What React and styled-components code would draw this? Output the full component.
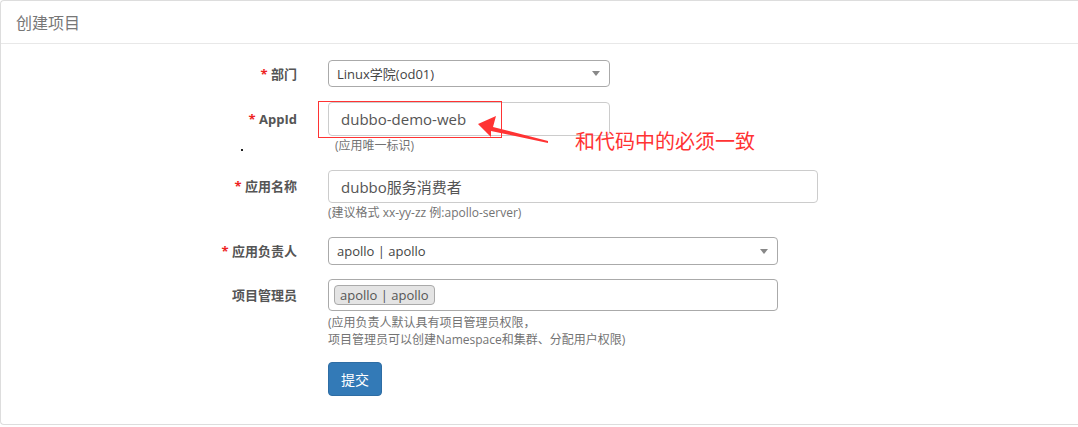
import React from 'react'
import styled, { createGlobalStyle } from 'styled-components'

const Global = createGlobalStyle`
  html, body {
    margin: 0;
    padding: 0;
    background: #fff;
  }
  body {
    font-family: "Open Sans", "Noto Sans CJK SC", sans-serif;
    font-size: 13px;
    color: #333;
  }
`

export default function App() {
  return (
    <>
      <Global />
      <Panel>
        <Heading>创建项目</Heading>
        <Body>
          <Row $top={16}>
            <Label $required>部门</Label>
            <Field>
              <Select $width={282} $height={27}>
                <span>Linux学院(od01)</span>
                <Caret />
              </Select>
            </Field>
          </Row>

          <Row $top={15}>
            <Label $required $center={17}>AppId</Label>
            <Field>
              <Input $width={282} $height={34}>dubbo-demo-web</Input>
              <Help $indent={7}>(应用唯一标识)</Help>
              <Frame />
              <Arrow width="90" height="40" viewBox="0 0 90 40">
                <polygon points="8,14 26,6 23,17 78,31 78,33 21,21 21,27" fill="#f33" />
              </Arrow>
              <Note>和代码中的必须一致</Note>
              <Speck />
            </Field>
          </Row>

          <Row $top={17}>
            <Label $required $center={16}>应用名称</Label>
            <Field>
              <Input $width={490} $height={33}>dubbo服务消费者</Input>
              <Help>(建议格式 xx-yy-zz 例:apollo-server)</Help>
            </Field>
          </Row>

          <Row $top={17}>
            <Label $required>应用负责人</Label>
            <Field>
              <Select $width={450} $height={28}>
                <span>apollo | apollo</span>
                <Caret />
              </Select>
            </Field>
          </Row>

          <Row $top={14}>
            <Label $center={16}>项目管理员</Label>
            <Field>
              <Multi>
                <Tag>apollo | apollo</Tag>
              </Multi>
              <Help $lines>
                (应用负责人默认具有项目管理员权限，
                <br />
                项目管理员可以创建Namespace和集群、分配用户权限)
              </Help>
            </Field>
          </Row>

          <Row $top={0}>
            <span />
            <Field>
              <Button>提交</Button>
            </Field>
          </Row>
        </Body>
      </Panel>
    </>
  )
}

const Panel = styled.div`
  box-sizing: border-box;
  width: 1078px;
  height: 425px;
  border: 1px solid #ddd;
  border-right: none;
  border-radius: 4px 0 0 4px;
  background: #fff;
  overflow: hidden;
`

const Heading = styled.div`
  height: 42px;
  padding-left: 15px;
  display: flex;
  align-items: center;
  font-size: 16px;
  color: #777;
  border-bottom: 1px solid #e8e8e8;
`

const Body = styled.div`
  display: flex;
  flex-direction: column;
`

const Row = styled.div`
  display: grid;
  grid-template-columns: 296px 1fr;
  column-gap: 31px;
  margin-top: ${p => p.$top}px;
`

const Label = styled.div`
  text-align: right;
  font-weight: bold;
  color: #555;
  font-size: 13px;
  line-height: 18px;
  padding-top: ${p => (p.$center || 14) - 9}px;

  &::before {
    content: ${p => (p.$required ? '"* "' : '""')};
    color: #e22;
  }
`

const Field = styled.div`
  position: relative;
  display: flex;
  flex-direction: column;
  align-items: flex-start;
`

const Select = styled.div`
  box-sizing: border-box;
  width: ${p => p.$width}px;
  height: ${p => p.$height}px;
  border: 1px solid #aaa;
  border-radius: 4px;
  padding: 0 8px;
  display: flex;
  align-items: center;
  justify-content: space-between;
  font-size: 13px;
  color: #444;
`

const Caret = styled.span`
  width: 0;
  height: 0;
  border-left: 4px solid transparent;
  border-right: 4px solid transparent;
  border-top: 5px solid #888;
  margin-right: 1px;
`

const Input = styled.div`
  box-sizing: border-box;
  width: ${p => p.$width}px;
  height: ${p => p.$height}px;
  border: 1px solid #ccc;
  border-radius: 4px;
  padding: 0 12px;
  display: flex;
  align-items: center;
  font-size: 15px;
  color: #555;
`

const Help = styled.div`
  margin-top: 3px;
  padding-left: ${p => p.$indent || 0}px;
  font-size: 12px;
  line-height: ${p => (p.$lines ? 17 : 14)}px;
  color: #737373;
`

const Multi = styled.div`
  box-sizing: border-box;
  width: 450px;
  height: 32px;
  border: 1px solid #aaa;
  border-radius: 4px;
  padding: 5px 5px;
  display: flex;
  align-items: flex-start;
`

const Tag = styled.span`
  box-sizing: border-box;
  height: 20px;
  padding: 0 5px;
  border: 1px solid #aaa;
  border-radius: 4px;
  background: #e4e4e4;
  display: flex;
  align-items: center;
  font-size: 13px;
  color: #555;
`

const Button = styled.button`
  margin-top: 14px;
  width: 54px;
  height: 34px;
  border: 1px solid #2e6da4;
  border-radius: 4px;
  background: #337ab7;
  color: #fff;
  font-family: inherit;
  font-size: 14px;
`

const Frame = styled.div`
  position: absolute;
  left: -10px;
  top: -1px;
  width: 184px;
  height: 37px;
  border: 1px solid #f33;
  box-sizing: border-box;
`

const Arrow = styled.svg`
  position: absolute;
  left: 142px;
  top: 8px;
`

const Note = styled.div`
  position: absolute;
  left: 247px;
  top: 26px;
  white-space: nowrap;
  font-size: 20px;
  line-height: 28px;
  color: #f33;
`

const Speck = styled.span`
  position: absolute;
  left: -87px;
  top: 47px;
  width: 2px;
  height: 2px;
  background: #222;
`
